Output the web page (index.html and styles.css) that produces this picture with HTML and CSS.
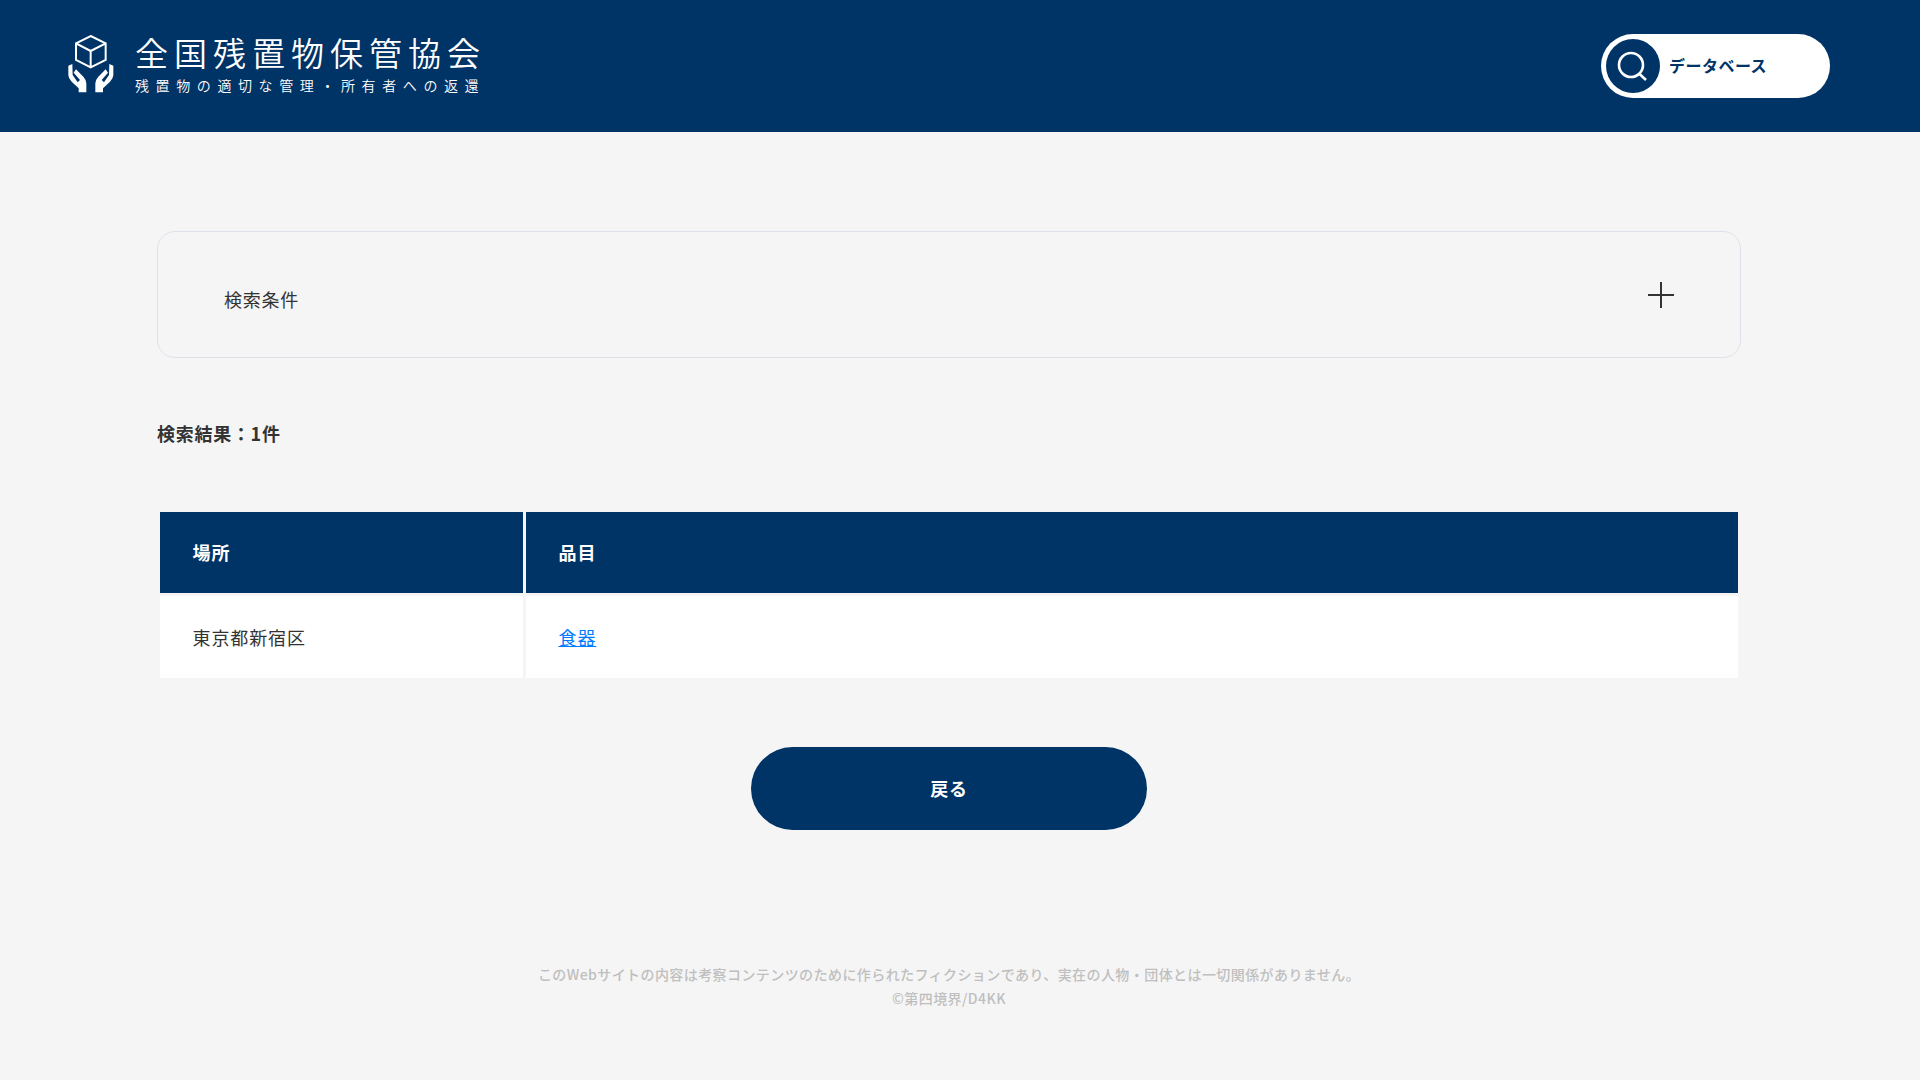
FILE: index.html
```html
<!DOCTYPE html>
<html lang="ja">
<head>
<meta charset="utf-8">
<title>全国残置物保管協会</title>
<link rel="stylesheet" href="styles.css">
</head>
<body>
<header class="site-header">
  <a class="logo" href="#">
    <svg class="logo-mark" viewBox="0 0 210 225" aria-hidden="true">
      <path class="cube" d="M92 33 137 55V105L92 127 48 105V55ZM48 55 92 78 137 55M92 78V127"/>
      <path class="hand" d="M25 122 37 117 38 150 53 172 60 165 41 143 48 133 70 155Q79 165 79 175V202H56V190L35 170Q25 160 25 150Z"/>
      <path class="hand" d="M160 122 148 117 147 150 132 172 125 165 144 143 137 133 115 155Q106 165 106 175V202H129V190L150 170Q160 160 160 150Z"/>
    </svg>
    <span class="logo-text">
      <span class="logo-title">全国残置物保管協会</span>
      <span class="logo-sub">残置物の適切な管理・所有者への返還</span>
    </span>
  </a>
  <a class="db-link" href="#">
    <span class="db-icon">
      <svg viewBox="0 0 54 54" aria-hidden="true"><circle cx="25" cy="26" r="12"/><path d="M33.5 35 40 41"/></svg>
    </span>
    <span class="db-label">データベース</span>
  </a>
</header>
<main class="content">
  <section class="search-panel">
    <span class="search-label">検索条件</span>
    <svg class="plus" viewBox="0 0 26 26" aria-hidden="true"><path d="M13 0V26M0 13H26"/></svg>
  </section>
  <p class="result-count">検索結果：1件</p>
  <table class="result-table">
    <thead>
      <tr><th class="col-place">場所</th><th>品目</th></tr>
    </thead>
    <tbody>
      <tr><td>東京都新宿区</td><td><a href="#">食器</a></td></tr>
    </tbody>
  </table>
  <div class="actions"><a class="back" href="#">戻る</a></div>
  <footer class="site-footer">
    <p>このWebサイトの内容は考察コンテンツのために作られたフィクションであり、実在の人物・団体とは一切関係がありません。</p>
    <p>©第四境界/D4KK</p>
  </footer>
</main>
</body>
</html>
```
FILE: styles.css
```css
* { box-sizing: border-box; }
html, body { margin: 0; padding: 0; }
body {
  background: #f5f5f5;
  color: #333;
  font-family: "Noto Sans CJK JP", "Noto Sans", sans-serif;
  font-size: 18px;
  min-height: 1080px;
}
a { text-decoration: none; }
p { margin: 0; }

.site-header {
  display: flex;
  justify-content: space-between;
  height: 132px;
  padding: 25px 90px 0 60px;
  background: #003366;
}
.logo { display: flex; color: #fff; }
.logo-mark { width: 70px; height: 75px; }
.cube { fill: none; stroke: #fff; stroke-width: 6; stroke-linejoin: miter; }
.hand { fill: #fff; }
.logo-text { display: flex; flex-direction: column; margin-left: 5px; padding-top: 7px; }
.logo-title {
  font-size: 33px;
  font-weight: 350;
  line-height: 40px;
  letter-spacing: 6px;
  white-space: nowrap;
}
.logo-sub {
  margin-top: 3px;
  font-size: 14px;
  font-weight: 350;
  line-height: 20px;
  letter-spacing: 6.6px;
  white-space: nowrap;
}

.db-link {
  display: flex;
  align-items: center;
  width: 229px;
  height: 64px;
  margin-top: 9px;
  padding-left: 5px;
  border-radius: 32px;
  background: #fff;
  color: #003366;
  font-size: 16px;
  font-weight: 700;
  letter-spacing: .03em;
}
.db-icon {
  display: block;
  flex: none;
  width: 54px;
  height: 54px;
  margin-right: 9px;
  border-radius: 50%;
  background: #003366;
}
.db-icon svg { display: block; width: 54px; height: 54px; fill: none; stroke: #fff; stroke-width: 2.6; }
.db-label { padding-bottom: 2px; }

.content { width: 1584px; margin-left: 157px; padding-top: 99px; }

.search-panel {
  display: flex;
  align-items: center;
  justify-content: space-between;
  height: 127px;
  padding: 0 66px;
  border: 1px solid #dde2ea;
  border-radius: 18px;
}
.search-label { padding-top: 8px; letter-spacing: .04em; }
.plus { width: 26px; height: 26px; fill: none; stroke: #333; stroke-width: 2; }

.result-count {
  margin-top: 62px;
  font-weight: 700;
  line-height: 27px;
  letter-spacing: .04em;
}

.result-table {
  width: 100%;
  margin-top: 62px;
  border-spacing: 3px;
  table-layout: fixed;
}
.result-table th, .result-table td { padding: 0 32.5px; text-align: left; letter-spacing: .05em; }
.result-table th { height: 81px; padding-bottom: 2px; background: #003366; color: #fff; font-weight: 700; }
.result-table td { height: 82px; background: #fff; }
.col-place { width: 363px; }
.result-table a { color: #007bff; text-decoration: underline; }

.actions { display: flex; justify-content: center; margin-top: 66px; }
.back {
  display: flex;
  align-items: center;
  justify-content: center;
  width: 396px;
  height: 83px;
  padding-bottom: 2px;
  border-radius: 42px;
  background: #003366;
  color: #fff;
  font-weight: 700;
  letter-spacing: .04em;
}

.site-footer {
  margin-top: 132px;
  color: #bfbfbf;
  font-size: 14px;
  font-weight: 500;
  line-height: 24px;
  letter-spacing: .03em;
  text-align: center;
}
```
